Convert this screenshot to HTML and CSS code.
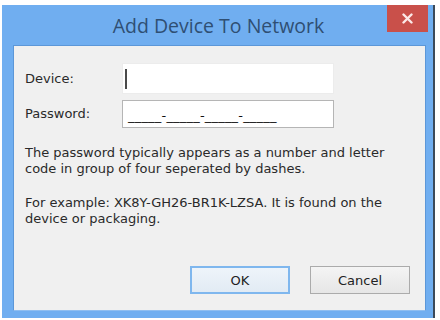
FILE: index.html
```html
<!DOCTYPE html>
<html>
<head>
<meta charset="utf-8">
<link rel="stylesheet" href="styles.css">
</head>
<body>
<div class="window">
  <div class="titlebar">
    <span></span>
    <span class="title">Add Device To Network</span>
    <button class="close" aria-label="Close">
      <svg width="11" height="11" viewBox="0 0 11 11"><path d="M1.5 1.5 L9.5 9.5 M9.5 1.5 L1.5 9.5" stroke="#fbe9e8" stroke-width="2.4" stroke-linecap="round"/></svg>
    </button>
  </div>
  <div class="content">
    <div class="form">
      <label class="label">Device:</label>
      <div class="input device"><span class="caret"></span></div>
      <label class="label">Password:</label>
      <div class="input password"><span class="mask">_____-_____-_____-_____</span></div>
    </div>
    <p class="text first">The password typically appears as a number and letter code in group of four seperated by dashes.</p>
    <p class="text">For example: XK8Y-GH26-BR1K-LZSA. It is found on the device or packaging.</p>
    <div class="buttons">
      <button class="btn default">OK</button>
      <button class="btn">Cancel</button>
    </div>
  </div>
</div>
</body>
</html>
```
FILE: styles.css
```css
html, body {
  margin: 0;
  padding: 0;
  background: #ffffff;
  width: 440px;
  height: 320px;
  overflow: hidden;
}
.window {
  margin: 5px 0 0 2px;
  width: 431px;
  height: 313px;
  background: #70aef0;
  border-right: 2px solid #3c4a5a;
  box-sizing: content-box;
  display: flex;
  flex-direction: column;
}
.titlebar {
  height: 40px;
  display: grid;
  grid-template-columns: 1fr auto 1fr;
  align-items: start;
}
.title {
  font-family: "Open Sans", "Noto Sans", sans-serif;
  font-size: 19.5px;
  color: #2f4f73;
  line-height: 22px;
  margin-top: 10px;
  margin-left: 2px;
}
.close {
  justify-self: end;
  margin-right: 5px;
  width: 41px;
  height: 27px;
  border: none;
  padding: 0;
  background: #c9504a;
  display: flex;
  align-items: center;
  justify-content: center;
}
.content {
  margin: 0 7px 0 11px;
  height: 266px;
  background: #f0f0f0;
  border: 1px solid #5c97d8;
  border-bottom-color: #8fbef0;
  box-sizing: border-box;
  padding: 17px 0 0 11px;
  font-family: "DejaVu Sans", sans-serif;
  font-size: 13px;
  color: #2a2a2a;
}
.form {
  display: grid;
  grid-template-columns: 97px 212px;
  grid-template-rows: 31px 28px;
  row-gap: 6px;
  align-items: center;
}
.label {
  line-height: 16px;
}
.input {
  height: 100%;
  background: #ffffff;
  box-sizing: border-box;
  display: flex;
  align-items: center;
}
.device {
  border: 1px solid #ececec;
  padding-left: 2px;
}
.caret {
  width: 2px;
  height: 20px;
  background: #4a4a4a;
}
.password {
  border: 1px solid #b5b5b5;
  padding-left: 5px;
}
.mask {
  font-family: "DejaVu Sans", sans-serif;
  font-size: 13px;
  letter-spacing: 0.2px;
  color: #111;
  margin-top: 2px;
}
.text {
  margin: 0;
  width: 366px;
  line-height: 16px;
}
.text.first {
  margin-top: 17px;
  margin-bottom: 18px;
}
.buttons {
  display: flex;
  justify-content: flex-end;
  gap: 20px;
  margin-top: 39px;
  margin-right: 15px;
}
.btn {
  width: 100px;
  height: 28px;
  font-family: "DejaVu Sans", sans-serif;
  font-size: 13px;
  color: #222;
  background: linear-gradient(#f4f4f4, #e6e6e6);
  border: 1px solid #ababab;
  padding: 0;
}
.btn.default {
  border: 2px solid #7fb7ee;
  background: linear-gradient(#eef4fa, #e2ebf4);
}
```
